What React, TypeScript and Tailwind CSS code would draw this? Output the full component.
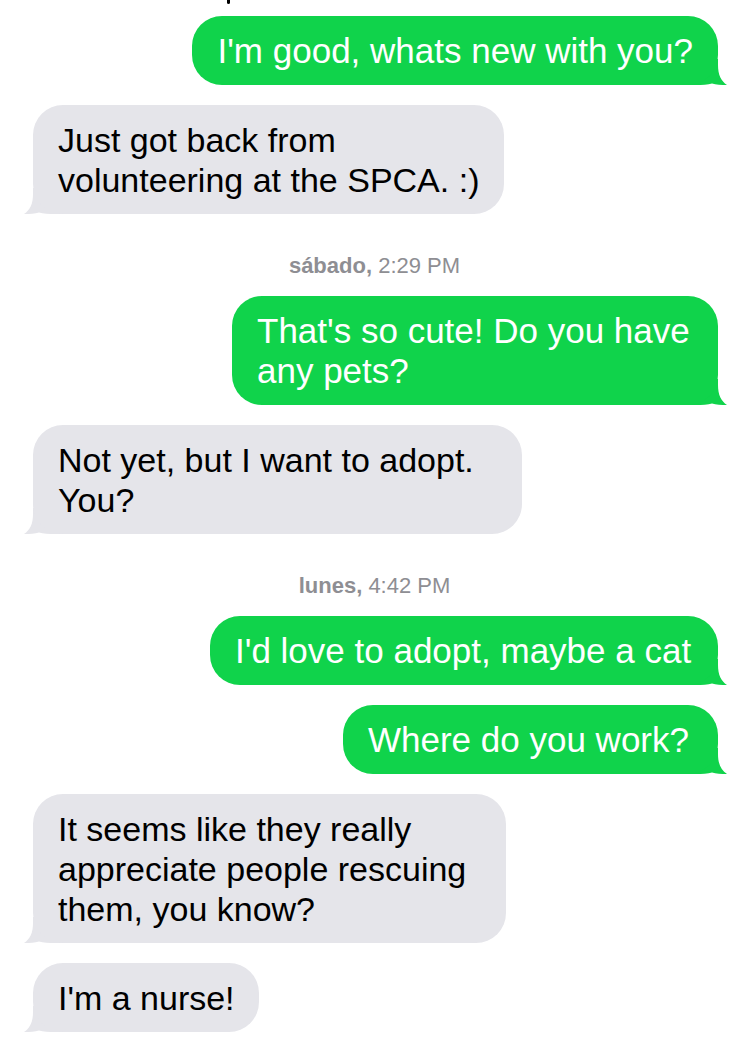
type Msg =
  | { kind: "me"; lines: string[]; w?: string }
  | { kind: "them"; lines: string[]; w?: string }
  | { kind: "time"; day: string; time: string };

const messages: Msg[] = [
  { kind: "me", lines: ["I'm good, whats new with you?"] },
  { kind: "them", lines: ["Just got back from", "volunteering at the SPCA. :)"] },
  { kind: "time", day: "sábado,", time: "2:29 PM" },
  { kind: "me", lines: ["That's so cute! Do you have", "any pets?"], w: "w-[486px]" },
  { kind: "them", lines: ["Not yet, but I want to adopt.", "You?"], w: "w-[489px]" },
  { kind: "time", day: "lunes,", time: "4:42 PM" },
  { kind: "me", lines: ["I'd love to adopt, maybe a cat"], w: "w-[508px]" },
  { kind: "me", lines: ["Where do you work?"], w: "w-[375px]" },
  { kind: "them", lines: ["It seems like they really", "appreciate people rescuing", "them, you know?"], w: "w-[473px]" },
  { kind: "them", lines: ["I'm a nurse!"], w: "w-[226px]" },
];

const Tail = ({ color, flip }: { color: string; flip?: boolean }) => (
  <svg
    width="40"
    height="26"
    viewBox="0 0 40 26"
    className={flip ? "absolute bottom-0 left-[-10px] -scale-x-100" : "absolute bottom-0 right-[-10px]"}
  >
    <path
      d="M0 0 H30 V6 C30 16 33 22 39 26 C33 26 28 25.3 24 24.4 C20 25.6 14 26 8 26 H0 Z"
      fill={color}
    />
  </svg>
);

const Bubble = ({ me, lines, w }: { me: boolean; lines: string[]; w?: string }) => (
  <div className={me ? "relative self-end" : "relative self-start"}>
    {/* tail goes first so the text paints over it */}
    <Tail color={me ? "#10d34b" : "#e5e5ea"} flip={!me} />
    <div
      className={clsx(
        "relative rounded-[30px] px-[25px] py-[14.5px] leading-[40px] whitespace-nowrap",
        me ? "bg-[#10d34b] text-[35px] text-white" : "bg-[#e5e5ea] text-[34px] text-black",
        w
      )}
    >
      {lines.map((l) => (
        <div key={l}>{l}</div>
      ))}
    </div>
  </div>
);

import clsx from "clsx";

export default function App() {
  return (
    <div className="h-[1051px] w-[749px] overflow-hidden bg-white font-['Liberation_Sans',Arial,sans-serif]">
      {/* bit of the previous message peeking in at the top */}
      <div className="h-[4px] pl-[227px]">
        <div className="h-[4px] w-[3px] rounded-b-[2px] bg-black" />
      </div>
      <div className="flex flex-col pl-[33px] pr-[31px] pt-[12px]">
        {messages.map((m, i) => {
          if (m.kind === "time") {
            return (
              <div
                key={i}
                className="mt-[40px] mb-[18px] -ml-[33px] -mr-[31px] text-center text-[22px] leading-[24px] text-[#8e8e93]"
              >
                <span className="font-bold">{m.day}</span> {m.time}
              </div>
            );
          }
          const prevTime = i > 0 && messages[i - 1].kind === "time";
          return (
            <div key={i} className={i === 0 || prevTime ? "flex flex-col" : "mt-[20px] flex flex-col"}>
              <Bubble me={m.kind === "me"} lines={m.lines} w={m.w} />
            </div>
          );
        })}
      </div>
    </div>
  );
}
